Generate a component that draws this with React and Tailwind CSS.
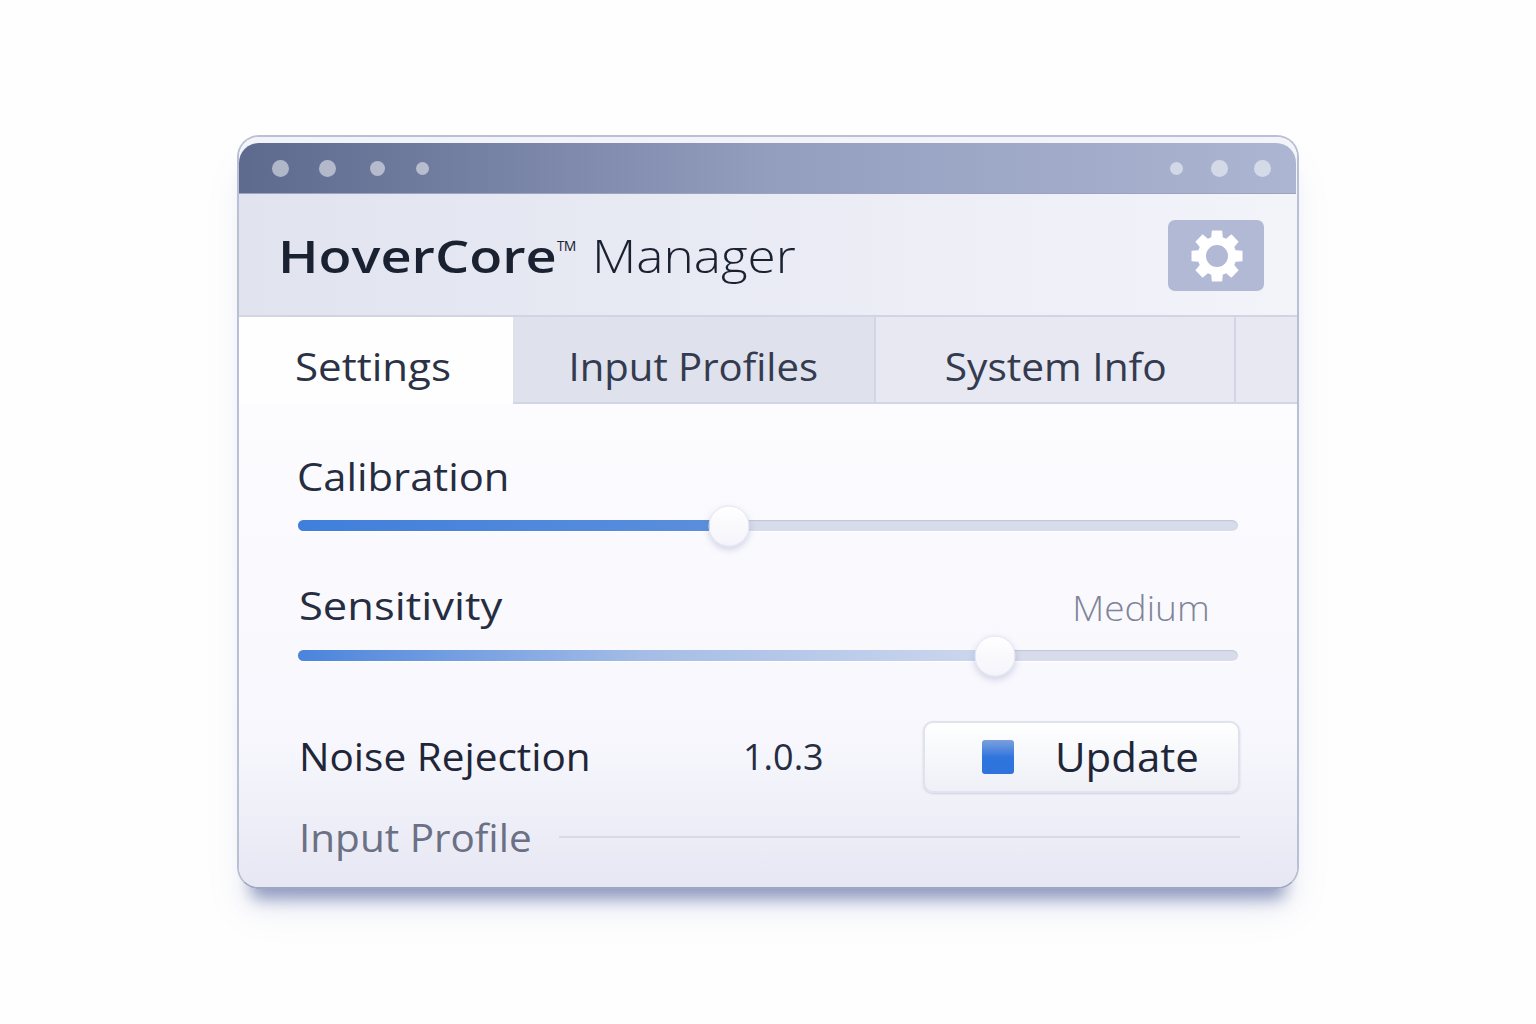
import React from 'react';

// gear outline with 8 teeth and a round hole
function gearPath() {
  const cx = 26, cy = 26, outer = 26, inner = 19.5, hole = 11, teeth = 8;
  const pts = [];
  for (let i = 0; i < teeth; i++) {
    const a = (i / teeth) * Math.PI * 2 - Math.PI / 2;
    const w1 = 0.3, w2 = 0.2;
    pts.push([a - w1, inner], [a - w2, outer], [a + w2, outer], [a + w1, inner]);
  }
  const d = pts
    .map(([a, r], i) => `${i ? 'L' : 'M'}${(cx + r * Math.cos(a)).toFixed(2)} ${(cy + r * Math.sin(a)).toFixed(2)}`)
    .join(' ');
  return `${d} Z M${cx + hole} ${cy} A${hole} ${hole} 0 1 0 ${cx - hole} ${cy} A${hole} ${hole} 0 1 0 ${cx + hole} ${cy} Z`;
}

function Dot({ size, className = 'bg-white/50' }) {
  return <span className={`block rounded-full ${size} ${className}`} />;
}

function Slider({ fillClass, fillWidth }) {
  return (
    <div className="relative h-[12px] w-[940px] rounded-full border-b border-white bg-[#d8dbe9] shadow-[inset_0_1px_1px_rgba(120,130,170,0.25)]">
      <div className={`h-full rounded-full ${fillClass}`} style={{ width: fillWidth }} />
      <span
        className="absolute top-1/2 h-[41px] w-[41px] -translate-x-1/2 -translate-y-1/2 rounded-full border border-[#e3e5f0] bg-gradient-to-b from-white to-[#f4f4fb] shadow-[0_3px_7px_rgba(110,120,170,0.3)]"
        style={{ left: fillWidth }}
      />
    </div>
  );
}

export default function App() {
  return (
    <div className="h-[1024px] bg-[#fefefe] pt-[135px] font-['Open_Sans',sans-serif]">
      <div className="mx-auto flex h-[754px] w-[1062px] flex-col overflow-hidden rounded-[22px] border-2 border-[#b9c0d5] border-b-[#9fa8c2] shadow-[0_24px_16px_-14px_rgba(85,100,155,0.6),0_26px_40px_-10px_rgba(110,125,190,0.16)]">
        {/* Title bar */}
        <div className="bg-[#f3f4f9] pt-[6px] pr-[1px]">
          <div className="flex h-[51px] items-center justify-between rounded-t-[20px] border-b border-[#9aa3c0] bg-gradient-to-r from-[#5d6a8d] via-[#939dbe] to-[#acb6d2] pl-[33px] pr-[25px]">
            <div className="flex items-center">
              <Dot size="h-[17px] w-[17px]" />
              <Dot size="ml-[30px] h-[17px] w-[17px]" />
              <Dot size="ml-[34px] h-[15px] w-[15px]" />
              <Dot size="ml-[31px] h-[13px] w-[13px]" />
            </div>
            <div className="flex items-center">
              <Dot size="h-[13px] w-[13px]" />
              <Dot size="ml-[28px] h-[17px] w-[17px]" />
              <Dot size="ml-[26px] h-[17px] w-[17px]" />
            </div>
          </div>
        </div>

        {/* Header */}
        <div className="flex h-[123px] items-center justify-between border-b-2 border-[#d0d4e3] bg-gradient-to-r from-[#e1e3ef] to-[#f3f4fa] pl-[39px] pr-[33px]">
          <h1 className="flex items-start whitespace-nowrap text-[46px] leading-none text-[#1a2130]">
            <span className="inline-block w-[279px] origin-left scale-x-[1.175] font-semibold">HoverCore</span>
            <span className="mt-[4px] inline-block w-[35px] text-[28px] font-light leading-none">™</span>
            <span className="inline-block origin-left scale-x-[1.115] font-light">Manager</span>
          </h1>
          <button className="mt-[2px] flex h-[71px] w-[96px] items-center justify-center rounded-[7px] bg-[#b1b9d5] pl-[2px]">
            <svg width="52" height="52" viewBox="0 0 52 52" aria-hidden="true">
              <path d={gearPath()} fill="#ffffff" fillRule="evenodd" />
            </svg>
          </button>
        </div>

        {/* Tabs */}
        <div className="flex h-[87px] text-[38px] leading-none">
          <div className="flex w-[274px] items-center bg-[#fefeff] pl-[56px] pt-[10px] text-[#2b3245]">
            <span className="inline-block origin-left scale-x-[1.107]">Settings</span>
          </div>
          <div className="flex w-[363px] items-center justify-center border-b-2 border-r-2 border-[#d2d6e4] bg-[#dfe1ed] pt-[12px] text-[#343b4f]">
            <span className="inline-block scale-x-[1.055]">Input Profiles</span>
          </div>
          <div className="flex w-[360px] items-center justify-center border-b-2 border-r-2 border-[#d2d6e4] bg-[#e7e8f2] pt-[12px] text-[#343b4f]">
            <span className="inline-block translate-x-[1px] scale-x-[1.07]">System Info</span>
          </div>
          <div className="flex-1 border-b-2 border-[#d2d6e4] bg-[#e7e8f2]" />
        </div>

        {/* Settings content */}
        <div className="flex flex-1 flex-col bg-gradient-to-b from-[#fcfcff] via-[#f7f7fd] via-70% to-[#e6e7f3] pl-[59px] pr-[57px]">
          <div className="-ml-[1px] mt-[49px] text-[39px] leading-[46px] text-[#262d40]">
            <span className="inline-block origin-left scale-x-[1.07]">Calibration</span>
          </div>
          <div className="mt-[21px]">
            <Slider fillClass="bg-gradient-to-r from-[#3f7fdb] to-[#5c8fdc]" fillWidth="431px" />
          </div>

          <div className="ml-[1px] mt-[50px] flex h-[46px] items-start justify-between pr-[30px]">
            <span className="inline-block origin-left scale-x-[1.116] text-[39px] leading-[46px] text-[#262d40]">Sensitivity</span>
            <span className="mt-[3px] inline-block origin-right scale-x-[1.06] text-[35px] font-light leading-[46px] text-[#7f8498]">Medium</span>
          </div>
          <div className="mt-[22px]">
            <Slider fillClass="bg-gradient-to-r from-[#4a84dc] via-[#a5bde6] to-[#cdd7ee]" fillWidth="697px" />
          </div>

          <div className="mt-[59px] flex h-[72px] items-center">
            <span className="ml-[1px] w-[444px] pb-[2px] text-[38px] leading-none text-[#1f2638]">
              <span className="inline-block origin-left scale-x-[1.066]">Noise Rejection</span>
            </span>
            <span className="w-[180px] text-[36px] leading-none text-[#262d40]">1.0.3</span>
            <button className="flex h-[72px] w-[317px] items-center rounded-[10px] border-2 border-[#e0e2ec] bg-gradient-to-b from-white to-[#eef0f7] pl-[57px] shadow-[0_1px_2px_rgba(120,130,170,0.3)]">
              <span className="block h-[34px] w-[32px] rounded-[3px] bg-gradient-to-b from-[#7b9fdc] via-[#2f75de] to-[#2f73dc]" />
              <span className="ml-[41px] inline-block origin-left scale-x-[1.05] text-[40px] leading-none text-[#1f2638]">Update</span>
            </button>
          </div>

          <div className="ml-[1px] mt-[21px] flex items-center">
            <span className="inline-block origin-left scale-x-[1.065] text-[38px] leading-[46px] text-[#6b7084]">Input Profile</span>
            <span className="ml-[42px] h-[2px] flex-1 bg-[#d8dae6]" />
          </div>
        </div>
      </div>
    </div>
  );
}
